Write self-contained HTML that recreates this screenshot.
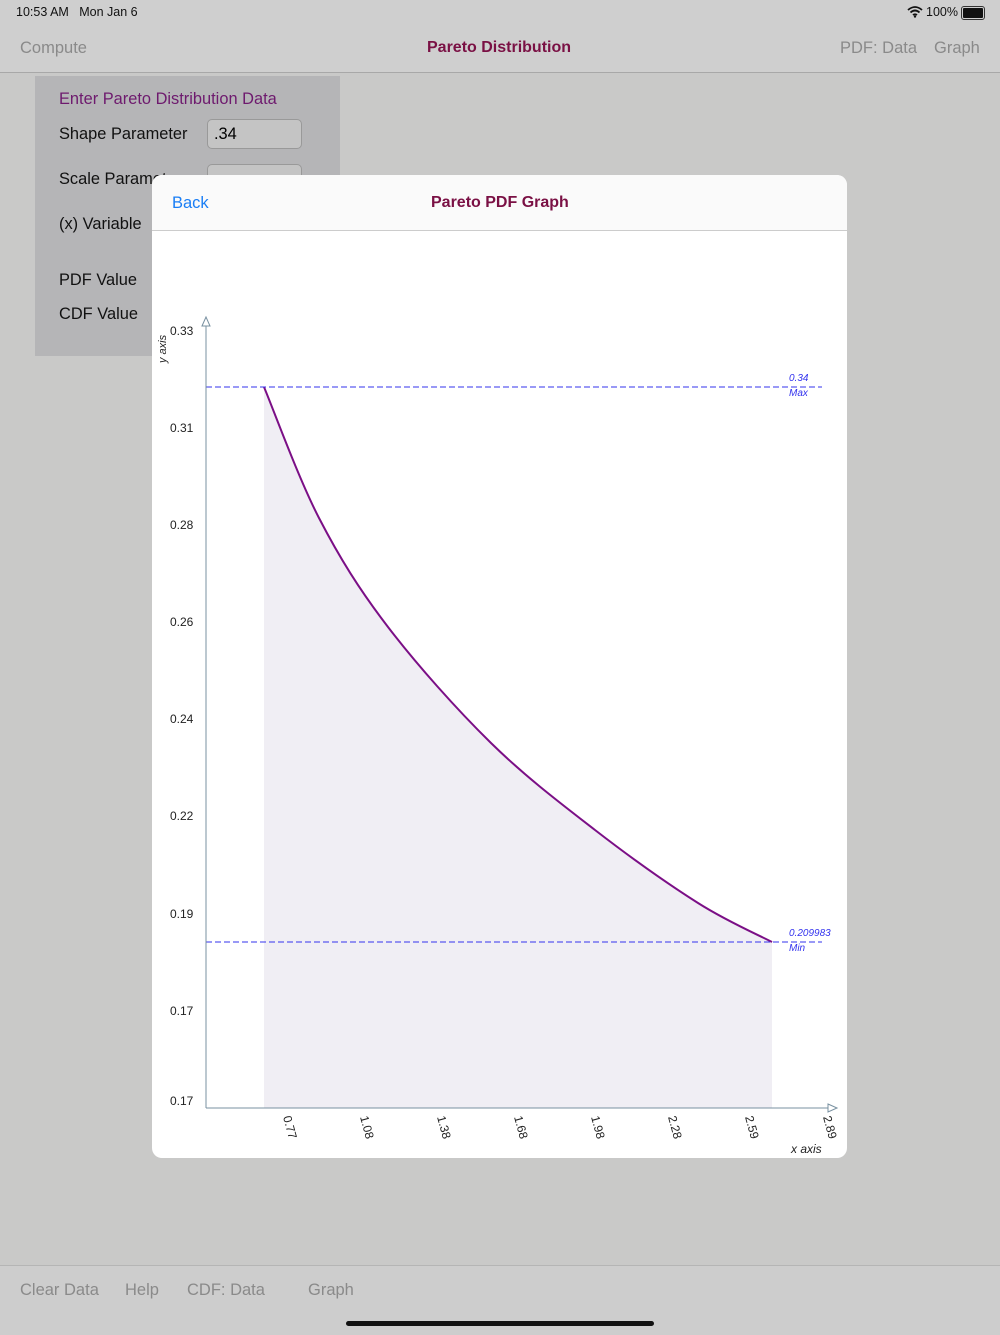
<!DOCTYPE html>
<html><head><meta charset="utf-8"><style>
body{margin:0;width:1000px;height:1334px;background:#c9c9c8;font-family:"Liberation Sans",sans-serif;position:relative;overflow:hidden}
.a{position:absolute;white-space:nowrap}
</style></head><body>
<div class="a" style="left:0;top:0;width:1000px;height:72px;background:#cfcfcf;border-bottom:1px solid #a8a8a8"></div>
<div class="a" style="left:16px;top:5px;font-size:12.5px;color:#111">10:53 AM&nbsp;&nbsp;&nbsp;Mon Jan 6</div>
<div class="a" style="left:926px;top:5px;font-size:12.5px;color:#111">100%</div>
<div class="a" style="left:961px;top:6px;width:20px;height:10px;border:1px solid #333;border-radius:3px;padding:1px"><div style="width:100%;height:100%;background:#111;border-radius:1px"></div></div>
<svg class="a" style="left:907px;top:6px" width="16" height="12" viewBox="0 0 16 12"><path d="M1 4 Q8 -2 15 4 M3.5 6.5 Q8 2.5 12.5 6.5 M6 9 Q8 7.5 10 9" stroke="#111" stroke-width="1.8" fill="none"/><circle cx="8" cy="10.5" r="1.2" fill="#111"/></svg>
<div class="a" style="left:20px;top:39px;font-size:16.5px;color:#8a8a8a">Compute</div>
<div class="a" style="left:427px;top:39px;font-size:16px;color:#7a1044;font-weight:bold">Pareto Distribution</div>
<div class="a" style="left:840px;top:39px;font-size:16.5px;color:#8a8a8a">PDF: Data</div>
<div class="a" style="left:934px;top:39px;font-size:16.5px;color:#8a8a8a">Graph</div>
<div class="a" style="left:35px;top:76px;width:305px;height:280px;background:#b5b5b7"></div>
<div class="a" style="left:59px;top:90px;font-size:16.4px;color:#6e1a6e">Enter Pareto Distribution Data</div>
<div class="a" style="left:59px;top:125px;font-size:16.4px;color:#111">Shape Parameter</div>
<div class="a" style="left:207px;top:119px;width:93px;height:28px;border:1px solid #999;border-radius:5px;background:#c4c4c4;font-size:16.4px;line-height:28px;text-indent:6px">.34</div>
<div class="a" style="left:59px;top:170px;font-size:16.4px;color:#111">Scale Parameter</div>
<div class="a" style="left:207px;top:164px;width:93px;height:28px;border:1px solid #999;border-radius:5px;background:#c4c4c4"></div>
<div class="a" style="left:59px;top:215px;font-size:16.4px;color:#111">(x) Variable</div>
<div class="a" style="left:59px;top:271px;font-size:16.4px;color:#111">PDF Value</div>
<div class="a" style="left:59px;top:305px;font-size:16.4px;color:#111">CDF Value</div>
<div class="a" style="left:152px;top:175px;width:695px;height:983px;background:#fff;border-radius:10px;overflow:hidden">
<div class="a" style="left:0;top:0;width:695px;height:55px;background:#fafafa;border-bottom:1px solid #ccc"></div>
<div class="a" style="left:20px;top:19px;font-size:16.5px;color:#1a7ef5">Back</div>
<div class="a" style="left:279px;top:19px;font-size:16px;color:#7a1044;font-weight:bold">Pareto PDF Graph</div>
</div>
<svg class="a" style="left:0;top:0" width="1000" height="1334" font-family="Liberation Sans" font-size="12">
<path d="M264 387 C273.2 408.8 298.3 478 319 518 C339.7 558 359.3 589.5 388 627 C416.7 664.5 456.5 709.2 491 743 C525.5 776.8 560.5 803.3 595 830 C629.5 856.7 668.5 884.3 698 903 C727.5 921.7 759.7 935.5 772 942 L772 1108 L264 1108Z" fill="#f0eef4"/>
<path d="M264 387 C273.2 408.8 298.3 478 319 518 C339.7 558 359.3 589.5 388 627 C416.7 664.5 456.5 709.2 491 743 C525.5 776.8 560.5 803.3 595 830 C629.5 856.7 668.5 884.3 698 903 C727.5 921.7 759.7 935.5 772 942" fill="none" stroke="#7b0f86" stroke-width="2"/>
<line x1="206" y1="387" x2="822" y2="387" stroke="#3333ee" stroke-dasharray="6,3"/>
<line x1="206" y1="942" x2="822" y2="942" stroke="#3333ee" stroke-dasharray="6,3"/>
<line x1="206" y1="325" x2="206" y2="1108" stroke="#7890a0"/>
<line x1="206" y1="1108" x2="832" y2="1108" stroke="#7890a0"/>
<path d="M202 326 L206 317 L210 326Z" fill="#fff" stroke="#7890a0"/>
<path d="M828 1104 L837 1108 L828 1112Z" fill="#fff" stroke="#7890a0"/>
<g fill="#3333ee" font-style="italic" font-size="10"><text x="789" y="381">0.34</text><text x="789" y="396">Max</text><text x="789" y="936">0.209983</text><text x="789" y="951">Min</text></g>
<g fill="#222"><text x="170" y="335">0.33</text><text x="170" y="432">0.31</text><text x="170" y="529">0.28</text><text x="170" y="626">0.26</text><text x="170" y="723">0.24</text><text x="170" y="820">0.22</text><text x="170" y="918">0.19</text><text x="170" y="1015">0.17</text><text x="170" y="1105">0.17</text></g>
<text transform="translate(166,363) rotate(-90)" font-style="italic" font-size="11" fill="#222">y axis</text>
<text x="791" y="1153" font-style="italic" fill="#222">x axis</text>
<g fill="#222"><text transform="translate(283,1117) rotate(75)">0.77</text><text transform="translate(360,1117) rotate(75)">1.08</text><text transform="translate(437,1117) rotate(75)">1.38</text><text transform="translate(514,1117) rotate(75)">1.68</text><text transform="translate(591,1117) rotate(75)">1.98</text><text transform="translate(668,1117) rotate(75)">2.28</text><text transform="translate(745,1117) rotate(75)">2.59</text><text transform="translate(823,1117) rotate(75)">2.89</text></g>
</svg>
<div class="a" style="left:0;top:1265px;width:1000px;height:69px;background:#cdcdcd;border-top:1px solid #b5b5b5"></div>
<div class="a" style="left:20px;top:1281px;font-size:16.5px;color:#8a8a8a">Clear Data</div>
<div class="a" style="left:125px;top:1281px;font-size:16.5px;color:#8a8a8a">Help</div>
<div class="a" style="left:187px;top:1281px;font-size:16.5px;color:#8a8a8a">CDF: Data</div>
<div class="a" style="left:308px;top:1281px;font-size:16.5px;color:#8a8a8a">Graph</div>
<div class="a" style="left:346px;top:1321px;width:308px;height:5px;border-radius:3px;background:#111"></div>
</body></html>
